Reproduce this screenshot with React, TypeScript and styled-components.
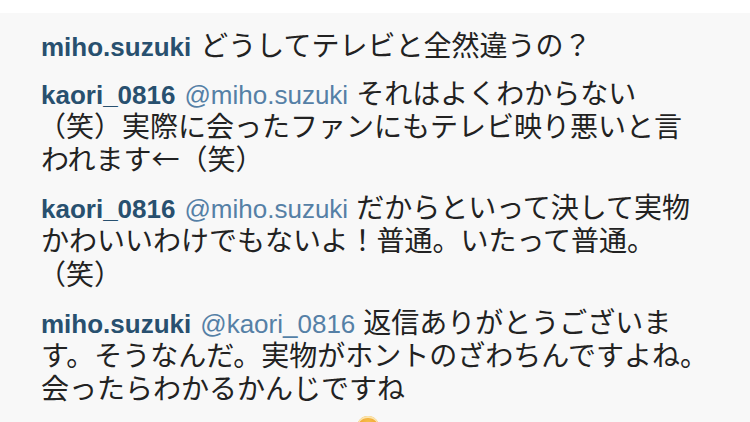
import React from "react";
import styled, { createGlobalStyle } from "styled-components";

const Global = createGlobalStyle`
  html, body { margin: 0; padding: 0; background: #ffffff; }
  body { width: 750px; height: 422px; overflow: hidden; }
`;

const Page = styled.div`
  width: 750px;
  height: 422px;
  padding-top: 13px;
  box-sizing: border-box;
  background: #ffffff;
  overflow: hidden;
`;

const Panel = styled.section`
  height: 409px;
  background: #f8f8f8;
  padding: 15px 0 0 41px;
  box-sizing: border-box;
  display: flex;
  flex-direction: column;
  gap: 14.5px;
  overflow: hidden;
`;

const Comment = styled.p`
  margin: 0;
  flex-shrink: 0;
  font-family: "Noto Sans CJK JP", "Noto Sans", sans-serif;
  font-size: 28px;
  line-height: 33.3px;
  color: #222222;
  white-space: nowrap;
`;

const User = styled.span`
  font-family: "Liberation Sans", Arial, sans-serif;
  font-weight: 700;
  font-size: 26px;
  line-height: 1;
  color: #28506f;
  margin-right: 9px;
`;

const Mention = styled.span`
  font-family: "Liberation Sans", Arial, sans-serif;
  font-weight: 400;
  font-size: 26px;
  line-height: 1;
  color: #5580a6;
  margin-right: 8px;
`;

const Paren = styled.span`
  margin-left: -3px;
`;

const Peek = styled.div`
  flex-shrink: 0;
  margin-left: 316px;
  margin-top: -3px;
  width: 22px;
  height: 22px;
  border-radius: 50%;
  background: radial-gradient(circle at 50% 30%, #f6c04a 0%, #ef9a2a 70%);
  box-shadow: inset 0 2px 0 #fbe6b0;
`;

type Row = { user: string; mention?: string; lines: React.ReactNode[] };

const rows: Row[] = [
  { user: "miho.suzuki", lines: ["どうしてテレビと全然違うの？"] },
  {
    user: "kaori_0816",
    mention: "@miho.suzuki",
    lines: ["それはよくわからない", <Paren key="p">（笑）実際に会ったファンにもテレビ映り悪いと言</Paren>, "われます←（笑）"],
  },
  {
    user: "kaori_0816",
    mention: "@miho.suzuki",
    lines: ["だからといって決して実物", "かわいいわけでもないよ！普通。いたって普通。", <Paren key="p">（笑）</Paren>],
  },
  {
    user: "miho.suzuki",
    mention: "@kaori_0816",
    lines: ["返信ありがとうございま", "す。そうなんだ。実物がホントのざわちんですよね。", "会ったらわかるかんじですね"],
  },
];

export default function App() {
  return (
    <>
      <Global />
      <Page>
        <Panel>
          {rows.map((r, i) => (
            <Comment key={i}>
              <User>{r.user}</User>
              {r.mention && <Mention>{r.mention}</Mention>}
              {r.lines.map((l, j) => (
                <React.Fragment key={j}>
                  {j > 0 && <br />}
                  {l}
                </React.Fragment>
              ))}
            </Comment>
          ))}
          <Peek />
        </Panel>
      </Page>
    </>
  );
}
